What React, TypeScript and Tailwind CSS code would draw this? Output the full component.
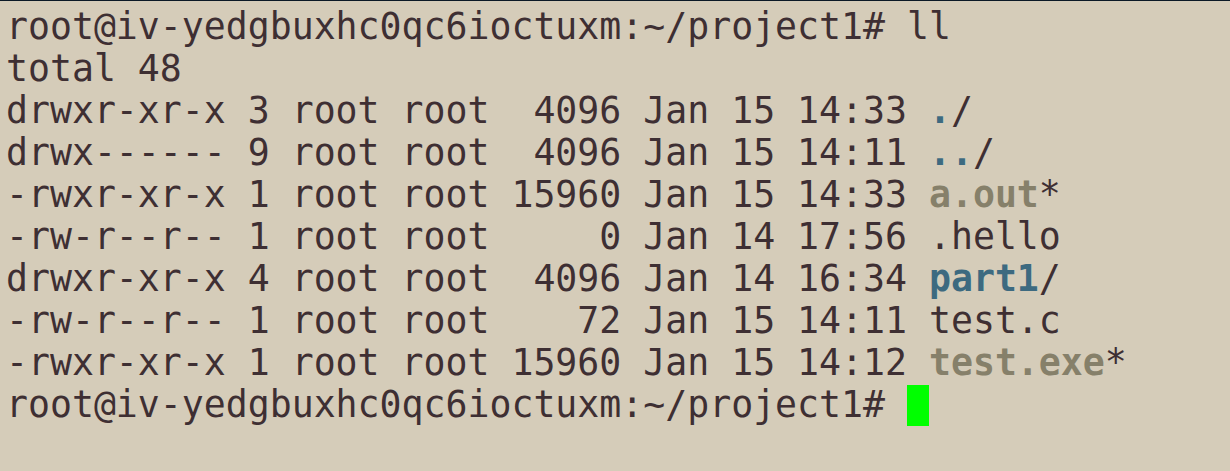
const Exe = ({ name }: { name: string }) => (
  <>
    <span className="font-bold text-[#86806a]">{name}</span>*
  </>
);

const Dir = ({ name }: { name: string }) => (
  <>
    <span className="font-bold text-[#3d6a80]">{name}</span>/
  </>
);

const rows: { meta: string; name: React.ReactNode }[] = [
  { meta: "drwxr-xr-x 3 root root  4096 Jan 15 14:33 ", name: <Dir name="." /> },
  { meta: "drwx------ 9 root root  4096 Jan 15 14:11 ", name: <Dir name=".." /> },
  { meta: "-rwxr-xr-x 1 root root 15960 Jan 15 14:33 ", name: <Exe name="a.out" /> },
  { meta: "-rw-r--r-- 1 root root     0 Jan 14 17:56 ", name: ".hello" },
  { meta: "drwxr-xr-x 4 root root  4096 Jan 14 16:34 ", name: <Dir name="part1" /> },
  { meta: "-rw-r--r-- 1 root root    72 Jan 15 14:11 ", name: "test.c" },
  { meta: "-rwxr-xr-x 1 root root 15960 Jan 15 14:12 ", name: <Exe name="test.exe" /> },
];

export default function App() {
  return (
    <div className="w-[1230px] h-[471px] overflow-hidden bg-[#d5ccb9] border-t border-[#0b1826]">
      <div className="pt-[5px] pl-[6px] font-['DejaVu_Sans_Mono',monospace] text-[36.5px] leading-[42px] text-[#3e2f33] whitespace-pre">
        <div>root@iv-yedgbuxhc0qc6ioctuxm:~/project1# ll</div>
        <div>total 48</div>
        {rows.map((r, i) => (
          <div key={i}>
            {r.meta}
            {r.name}
          </div>
        ))}
        <div className="flex items-center">
          <span>root@iv-yedgbuxhc0qc6ioctuxm:~/project1# </span>
          <span className="inline-block w-[22px] h-[41px] bg-[#00ff00]" />
        </div>
      </div>
    </div>
  );
}
